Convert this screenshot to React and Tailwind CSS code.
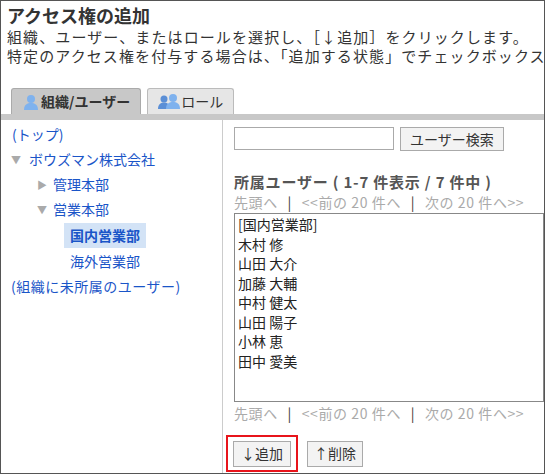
import React from 'react';

const font = { fontFamily: '"Noto Sans CJK JP", "Liberation Sans", sans-serif' };

const UserIcon = ({ double }) => (
  <svg width={double ? 22 : 18} height="16" viewBox={double ? '0 0 22 16' : '0 0 18 16'}>
    {double && (
      <g fill="#5b8fd6">
        <circle cx="6" cy="5" r="3.5" />
        <path d="M0 15c0-5 3-6.5 6-6.5s6 1.5 6 6.5z" />
      </g>
    )}
    <g fill="#7fb2ee" transform={double ? 'translate(6 -1)' : ''}>
      <circle cx="9" cy="5" r="4" />
      <path d="M2 16c0-5.5 3.5-7 7-7s7 1.5 7 7z" />
    </g>
  </svg>
);

const Pager = () => (
  <div className="text-[14px] tracking-[0.6px] text-[#aaaaaa] whitespace-nowrap">
    先頭へ <span className="text-[#333] mx-[6px]">|</span> &lt;&lt;前の 20 件へ <span className="text-[#333] mx-[6px]">|</span> 次の 20 件へ&gt;&gt;
  </div>
);

export default function App() {
  const users = ['[国内営業部]', '木村 修', '山田 大介', '加藤 大輔', '中村 健太', '山田 陽子', '小林 恵', '田中 愛美'];
  return (
    <div style={font} className="w-[545px] h-[474px] border border-[#555] bg-white overflow-hidden text-[#333]">
      <div className="px-[6px] pt-[2px]">
        <div className="text-[18px] font-bold leading-[24px]">アクセス権の追加</div>
        <div className="text-[15px] tracking-[1.1px] leading-[19px] whitespace-nowrap">組織、ユーザー、またはロールを選択し、［↓追加］をクリックします。</div>
        <div className="text-[15px] tracking-[1.1px] leading-[19px] whitespace-nowrap">特定のアクセス権を付与する場合は、「追加する状態」でチェックボックスを選択します。</div>
      </div>
      <div className="flex items-end gap-[6px] pl-[10px] mt-[23px] h-[26px]">
        <div className="h-[26px] px-[10px] flex items-center gap-[1px] bg-[#c8c8c8] border border-[#aaa] border-b-0 rounded-t-[3px] text-[14px] font-bold">
          <UserIcon />組織/ユーザー
        </div>
        <div className="h-[26px] px-[10px] flex items-center gap-[1px] bg-[#e6e6e6] border border-[#bbb] border-b-0 rounded-t-[3px] text-[14px]">
          <UserIcon double />ロール
        </div>
      </div>
      <div className="h-[6px] bg-[#c8c8c8]" />
      <div className="flex h-[360px]">
        <div className="w-[222px] border-r border-[#ccc] pt-[2px] pl-[10px] text-[14px] text-[#1a55c8] leading-[25px]">
          <div className="pl-[1px]">(トップ)</div>
          <div className="flex items-center"><span className="text-[#aaa] text-[10px] w-[18px]">▼</span>ボウズマン株式会社</div>
          <div className="flex items-center pl-[26px]"><span className="text-[#aaa] text-[10px] w-[16px]">▶</span>管理本部</div>
          <div className="flex items-center pl-[26px]"><span className="text-[#aaa] text-[10px] w-[16px]">▼</span>営業本部</div>
          <div className="pl-[53px] py-[1px]"><span className="inline-block px-[6px] bg-[#d3e3f6] font-bold">国内営業部</span></div>
          <div className="pl-[59px]">海外営業部</div>
          <div className="tracking-[0.5px]">(組織に未所属のユーザー)</div>
        </div>
        <div className="flex-1 pl-[11px] pt-[7px]">
          <div className="flex gap-[6px]">
            <div className="w-[160px] h-[23px] border border-[#aaa]" />
            <button className="h-[24px] px-[9px] border border-[#aaa] bg-[#f3f3f3] text-[14px]">ユーザー検索</button>
          </div>
          <div className="mt-[21px] text-[15px] font-bold text-[#555] whitespace-nowrap leading-[20px] tracking-[0.8px]">所属ユーザー ( 1-7 件表示 / 7 件中 )</div>
          <Pager />
          <div className="h-[189px] border border-[#888] text-[14px] leading-[19.5px] pl-[3px] pt-[1px] text-[#222]">
            {users.map(u => <div key={u}>{u}</div>)}
          </div>
          <div className="mt-[1px]"><Pager /></div>
          <div className="flex gap-[9px] mt-[11px] -ml-[8px]">
            <div className="border-2 border-[#e8141b] px-[5px] py-[3px]">
              <button className="h-[26px] w-[58px] border border-[#aaa] bg-[#f3f3f3] text-[14px]">↓追加</button>
            </div>
            <div className="py-[5px]">
              <button className="h-[26px] w-[56px] border border-[#aaa] bg-[#f3f3f3] text-[14px]">↑削除</button>
            </div>
          </div>
        </div>
      </div>
    </div>
  );
}
